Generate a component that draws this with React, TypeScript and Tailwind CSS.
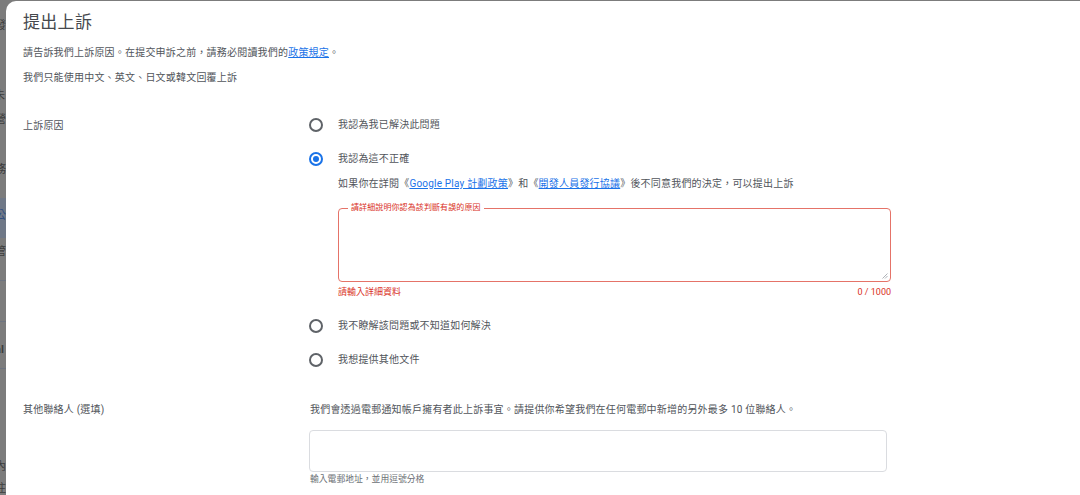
import React from 'react';

const font = { fontFamily: 'Roboto, "Noto Sans CJK TC", sans-serif' };

function Radio({ checked }: { checked?: boolean }) {
  return (
    <span
      className={
        'flex h-[14px] w-[14px] shrink-0 items-center justify-center rounded-full border-2 ' +
        (checked ? 'border-[#1a73e8]' : 'border-[#5f6368]')
      }
    >
      {checked && <span className="h-[6px] w-[6px] rounded-full bg-[#1a73e8]" />}
    </span>
  );
}

function Option({ label, checked }: { label: string; checked?: boolean }) {
  return (
    <div className="flex h-[34px] items-center">
      <Radio checked={checked} />
      <span className="ml-[15px] text-[10px] leading-4 tracking-[0.2px] text-[#51555b]">{label}</span>
    </div>
  );
}

export default function App() {
  return (
    <div lang="zh-Hant" className="relative h-[495px] w-[1080px] overflow-hidden bg-[#7c7c7c]" style={font}>
      {/* 背後的頁面 (被遮罩) */}
      <div className="flex flex-col text-[11px] leading-4 text-[#3d3d3d]">
        <div className="mt-[18px] -ml-[5px]">發</div>
        <div className="mt-[54px] -ml-[6px]">未</div>
        <div className="mt-[8px] -ml-[5px]">營</div>
        <div className="mt-[34px] -ml-[5px]">務</div>
        <div className="mt-[20px] h-[40px] bg-[#6f7887] -ml-[5px] pt-[10px] text-[#2e4d80]">公</div>
        <div className="mt-[6px] -ml-[5px]">管</div>
        <div className="mt-[20px] h-px bg-[#6d7480]" />
        <div className="mt-[40px] h-px bg-[#6d7480]" />
        <div className="mt-[20px] -ml-[5px] font-bold">al</div>
        <div className="mt-[10px] h-px bg-[#6d7480]" />
        <div className="mt-[90px] -ml-[5px]">內</div>
        <div className="mt-[6px] -ml-[5px]">注</div>
        <div className="mt-[10px] h-[6px] bg-[#6d7480]" />
      </div>

      {/* 對話框 */}
      <div className="absolute left-[6px] top-[1px] right-[-12px] bottom-[-12px] rounded-tl-[10px] bg-white pl-[17px] pt-[9px]">
        <h1 className="text-[17px] leading-6 tracking-[0.3px] text-[#46494e]">提出上訴</h1>
        <p className="mt-[11px] text-[10px] leading-4 tracking-[0.2px] text-[#51555b]">
          請告訴我們上訴原因。在提交申訴之前，請務必閱讀我們的
          <a className="text-[#1a73e8] underline">政策規定</a>。
        </p>
        <p className="mt-[9px] text-[10px] leading-4 tracking-[0.2px] text-[#51555b]">
          我們只能使用中文、英文、日文或韓文回覆上訴
        </p>

        {/* 上訴原因 */}
        <div className="mt-[22px] flex">
          <div className="flex h-[34px] w-[286px] shrink-0 items-center text-[10px] tracking-[0.2px] text-[#51555b]">
            上訴原因
          </div>
          <div className="flex flex-col">
            <Option label="我認為我已解決此問題" />
            <Option label="我認為這不正確" checked />
            <div className="pl-[29px]">
              <p className="text-[10px] leading-4 tracking-[0.2px] text-[#51555b]">
                如果你在詳閱《<a className="text-[#1a73e8] underline">Google Play 計劃政策</a>》和《
                <a className="text-[#1a73e8] underline">開發人員發行協議</a>》後不同意我們的決定，可以提出上訴
              </p>
              <div className="relative mt-[16px] h-[74px] w-[553px] rounded-[4px] border border-[#e57368]">
                <span className="absolute -top-[7px] left-[9px] bg-white px-[3px] text-[8px] leading-3 tracking-[0.1px] text-[#d93025]">
                  請詳細說明你認為該判斷有誤的原因
                </span>
                <svg className="absolute bottom-[2px] right-[2px]" width="6" height="6" viewBox="0 0 6 6">
                  <path d="M5.5 0.5 L0.5 5.5 M5.5 3 L3 5.5" stroke="#9aa0a6" strokeWidth="0.8" />
                </svg>
              </div>
              <div className="mt-[2px] flex w-[553px] justify-between text-[9px] leading-4 text-[#d93025]">
                <span>請輸入詳細資料</span>
                <span>0 / 1000</span>
              </div>
            </div>
            <div className="mt-[9px]">
              <Option label="我不瞭解該問題或不知道如何解決" />
              <Option label="我想提供其他文件" />
            </div>
          </div>
        </div>

        {/* 其他聯絡人 */}
        <div className="mt-[25px] flex">
          <div className="w-[286px] shrink-0 text-[10px] leading-4 tracking-[0.2px] text-[#51555b]">
            其他聯絡人 (選填)
          </div>
          <div className="flex flex-col pl-px">
            <p className="text-[10px] leading-4 tracking-[0.2px] text-[#51555b]">
              我們會透過電郵通知帳戶擁有者此上訴事宜。請提供你希望我們在任何電郵中新增的另外最多 10 位聯絡人。
            </p>
            <div className="mt-[12px] -ml-px h-[42px] w-[578px] rounded-[4px] border border-[#dadce0]" />
            <p className="mt-px text-[8.8px] leading-3 text-[#6b6f75]">輸入電郵地址，並用逗號分格</p>
          </div>
        </div>
      </div>
    </div>
  );
}
